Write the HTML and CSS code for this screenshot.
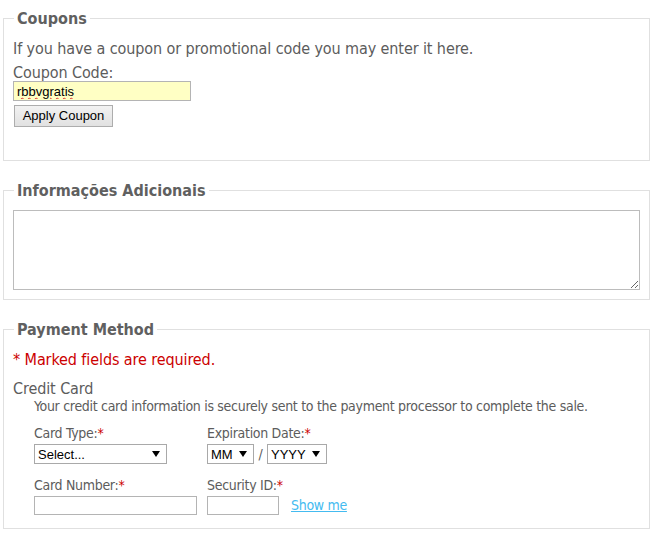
FILE: index.html
```html
<!DOCTYPE html>
<html>
<head>
<meta charset="utf-8">
<link rel="stylesheet" href="styles.css">
</head>
<body>
<div class="page">
  <fieldset class="box box-coupons">
    <legend class="box-title">Coupons</legend>
    <p class="intro">If you have a coupon or promotional code you may enter it here.</p>
    <label class="coupon-label" for="coupon">Coupon Code:</label>
    <input class="coupon-input" id="coupon" type="text" value="rbbvgratis">
    <button class="btn" type="button">Apply Coupon</button>
  </fieldset>

  <fieldset class="box box-info">
    <legend class="box-title">Informações Adicionais</legend>
    <textarea class="notes"></textarea>
  </fieldset>

  <fieldset class="box box-payment">
    <legend class="box-title">Payment Method</legend>
    <p class="required-note">* Marked fields are required.</p>
    <div class="method-title">Credit Card</div>
    <div class="method-body">
      <p class="secure-note">Your credit card information is securely sent to the payment processor to complete the sale.</p>
      <div class="card-grid">
        <div class="field">
          <label class="field-label">Card Type:<span class="req">*</span></label>
          <div class="select-wrap select-type">
            <select class="select"><option>Select...</option></select>
          </div>
        </div>
        <div class="field">
          <label class="field-label">Expiration Date:<span class="req">*</span></label>
          <div class="date-row">
            <div class="select-wrap select-mm">
              <select class="select"><option>MM</option></select>
            </div>
            <span class="slash">/</span>
            <div class="select-wrap select-yyyy">
              <select class="select"><option>YYYY</option></select>
            </div>
          </div>
        </div>
        <div class="field">
          <label class="field-label">Card Number:<span class="req">*</span></label>
          <input class="text-input input-number" type="text">
        </div>
        <div class="field">
          <label class="field-label">Security ID:<span class="req">*</span></label>
          <div class="cvv-row">
            <input class="text-input input-cvv" type="text">
            <a class="show-me" href="#">Show me</a>
          </div>
        </div>
      </div>
    </div>
  </fieldset>
</div>
</body>
</html>
```

FILE: styles.css
```css
html, body {
  margin: 0;
  padding: 0;
  background: #ffffff;
}

body {
  font-family: "DejaVu Sans Condensed", "DejaVu Sans", sans-serif;
  color: #5c5c5c;
  font-size: 16px;
}

.page {
  padding: 8px 6px 0 3px;
}

.box {
  margin: 0;
  border: 1px solid #e0e0e0;
  padding: 11px 9px 33px 9px;
  min-inline-size: 0;
}

.box + .box {
  margin-top: 19px;
}

.box-title {
  margin-left: 1px;
  padding: 2px 3px 0 3px;
  font-weight: bold;
  font-size: 16px;
  line-height: 18px;
  color: #606060;
  letter-spacing: 0;
}

.intro {
  margin: 0;
  font-size: 16px;
  line-height: 20px;
  letter-spacing: -0.1px;
}

.coupon-label {
  display: block;
  margin-top: 5px;
  font-size: 16px;
  line-height: 17px;
  letter-spacing: -0.1px;
}

.coupon-input {
  display: block;
  box-sizing: border-box;
  width: 178px;
  height: 20px;
  margin: 0;
  padding: 0 3px;
  border: 1px solid #b4b4b4;
  background: #ffffc4;
  font-family: "Liberation Sans", Arial, sans-serif;
  font-size: 13px;
  color: #000;
  text-decoration: underline wavy #e03030;
  text-decoration-thickness: 1px;
  outline: none;
}

.btn {
  display: block;
  box-sizing: border-box;
  margin: 4px 0 0 1px;
  height: 22px;
  width: 99px;
  padding: 0 6px 1px 6px;
  border: 1px solid #adadad;
  border-radius: 0;
  background: linear-gradient(#f2f2f2, #e1e1e1);
  font-family: "Liberation Sans", Arial, sans-serif;
  font-size: 13px;
  color: #000;
}

.box-info {
  padding-top: 10px;
  padding-bottom: 9px;
}

.notes {
  display: block;
  box-sizing: border-box;
  width: 627px;
  height: 80px;
  margin: 0;
  border: 1px solid #bcbcbc;
  padding: 2px;
  resize: both;
  font-family: "Liberation Sans", Arial, sans-serif;
}

.box-payment {
  padding-bottom: 13px;
}

.required-note {
  margin: 0;
  color: #cc0000;
  font-size: 16px;
  line-height: 20px;
  letter-spacing: -0.1px;
}

.method-title {
  margin-top: 9px;
  font-size: 16px;
  line-height: 20px;
  letter-spacing: -0.1px;
}

.method-body {
  padding-left: 21px;
}

.secure-note {
  margin: -1px 0 0 0;
  font-size: 14px;
  line-height: 17px;
  letter-spacing: -0.3px;
}

.card-grid {
  display: grid;
  grid-template-columns: 173px auto;
  row-gap: 13px;
  margin-top: 10px;
}

.field-label {
  display: block;
  font-size: 14px;
  line-height: 17px;
  letter-spacing: -0.3px;
  margin-bottom: 2px;
}

.req {
  color: #cc0000;
}

.select-wrap {
  position: relative;
  box-sizing: border-box;
  height: 20px;
  border: 1px solid #a9a9a9;
  background: #fff;
}

.select-wrap::after {
  content: "";
  position: absolute;
  right: 6px;
  top: 6px;
  border-left: 4px solid transparent;
  border-right: 4px solid transparent;
  border-top: 6px solid #000;
  pointer-events: none;
}

.select {
  appearance: none;
  -webkit-appearance: none;
  display: block;
  width: 100%;
  height: 18px;
  margin: 0;
  border: 0;
  padding: 0 0 0 3px;
  background: transparent;
  font-family: "Liberation Sans", Arial, sans-serif;
  font-size: 13px;
  color: #000;
  outline: none;
}

.select-type {
  width: 133px;
}

.date-row {
  display: flex;
  align-items: center;
}

.select-mm {
  width: 47px;
}

.select-yyyy {
  width: 60px;
}

.slash {
  width: 13px;
  text-align: center;
  font-size: 14px;
  line-height: 20px;
}

.text-input {
  display: block;
  box-sizing: border-box;
  height: 19px;
  margin: 0;
  border: 1px solid #b4b4b4;
  padding: 0 2px;
  background: #fff;
  outline: none;
}

.input-number {
  width: 163px;
}

.input-cvv {
  width: 72px;
}

.cvv-row {
  display: flex;
  align-items: center;
  gap: 12px;
}

.show-me {
  font-size: 14px;
  line-height: 19px;
  color: #44bbf0;
  text-decoration: underline;
  letter-spacing: -0.3px;
}
```
